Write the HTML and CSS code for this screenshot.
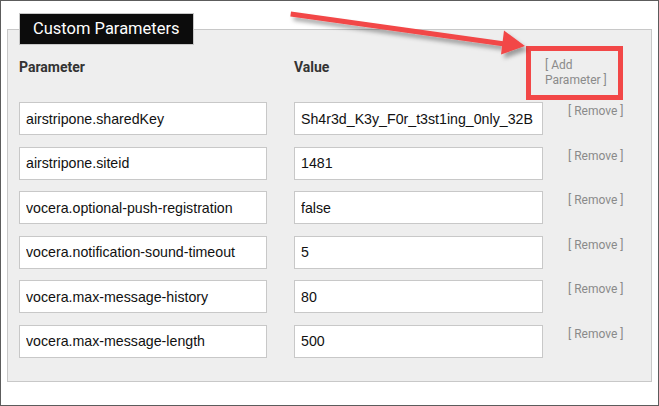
FILE: index.html
```html
<!DOCTYPE html>
<html>
<head>
<meta charset="utf-8">
<link rel="stylesheet" href="styles.css">
</head>
<body>
<div class="frame">
  <fieldset class="params">
    <legend class="params-title">Custom Parameters</legend>
    <div class="head">
      <div class="head-label">Parameter</div>
      <div class="head-label">Value</div>
      <div class="add">[ Add<br>Parameter ]</div>
    </div>
    <div class="rows">
      <input class="field" value="airstripone.sharedKey"><input class="field" value="Sh4r3d_K3y_F0r_t3st1ing_0nly_32B"><span class="remove">[ Remove ]</span>
      <input class="field" value="airstripone.siteid"><input class="field" value="1481"><span class="remove">[ Remove ]</span>
      <input class="field" value="vocera.optional-push-registration"><input class="field" value="false"><span class="remove">[ Remove ]</span>
      <input class="field" value="vocera.notification-sound-timeout"><input class="field" value="5"><span class="remove">[ Remove ]</span>
      <input class="field" value="vocera.max-message-history"><input class="field" value="80"><span class="remove">[ Remove ]</span>
      <input class="field" value="vocera.max-message-length"><input class="field" value="500"><span class="remove">[ Remove ]</span>
    </div>
  </fieldset>
  <div class="callout-box"></div>
  <svg class="callout-arrow" width="659" height="406" viewBox="0 0 659 406">
    <defs>
      <filter id="sh" x="-10%" y="-50%" width="120%" height="200%">
        <feDropShadow dx="3" dy="4" stdDeviation="2" flood-color="#000" flood-opacity="0.35"/>
      </filter>
    </defs>
    <g filter="url(#sh)" fill="#f24747" stroke="none">
      <path d="M291 11.5 L505 41.5 L504.3 46.5 L290.3 16.5 Z"/>
      <path d="M504 30.5 L525 46 L501 54.5 Z"/>
    </g>
  </svg>
</div>
</body>
</html>
```
FILE: styles.css
```css
html, body {
  margin: 0;
  padding: 0;
  background: #fff;
}
.frame {
  position: relative;
  width: 659px;
  height: 406px;
  box-sizing: border-box;
  border: 1px solid #5c5c5c;
  padding: 12px 6px 0 6px;
  font-family: Roboto, "Liberation Sans", sans-serif;
}
.params {
  margin: 0;
  width: 645px;
  height: 369px;
  box-sizing: border-box;
  border: 1px solid #c8c8c8;
  background: #eeeeee;
  padding: 13px 0 0 11px;
}
.params-title {
  background: #0c0c0c;
  color: #fff;
  border: 1px solid #c8c8c8;
  font-size: 16.5px;
  line-height: 30px;
  padding: 0 13px;
  margin: 0;
}
.head {
  display: grid;
  grid-template-columns: 275px 251px 1fr;
  height: 44px;
}
.head-label {
  font-weight: 700;
  font-size: 14px;
  color: #333;
  line-height: 16px;
  padding-top: 1px;
}
.add {
  font-size: 12px;
  line-height: 15px;
  color: #8a8a8a;
}
.rows {
  display: grid;
  grid-template-columns: 275px 274px 1fr;
  grid-auto-rows: 33px;
  row-gap: 11.6px;
}
.field {
  box-sizing: border-box;
  height: 33px;
  width: 248px;
  margin: 0;
  border: 1px solid #c8c8c8;
  background: #fff;
  padding: 0 6px;
  font-family: "Liberation Sans", Arial, sans-serif;
  font-size: 14.2px;
  color: #111;
  outline: none;
}
.rows .field:nth-child(3n+2) {
  width: 249px;
}
.remove {
  font-size: 12px;
  line-height: 15px;
  color: #8a8a8a;
  padding-top: 2px;
}
.callout-box {
  position: absolute;
  left: 525px;
  top: 45px;
  width: 97px;
  height: 54px;
  box-sizing: border-box;
  border: 5px solid #f24747;
}
.callout-arrow {
  position: absolute;
  left: -1px;
  top: -1px;
  pointer-events: none;
}
```
